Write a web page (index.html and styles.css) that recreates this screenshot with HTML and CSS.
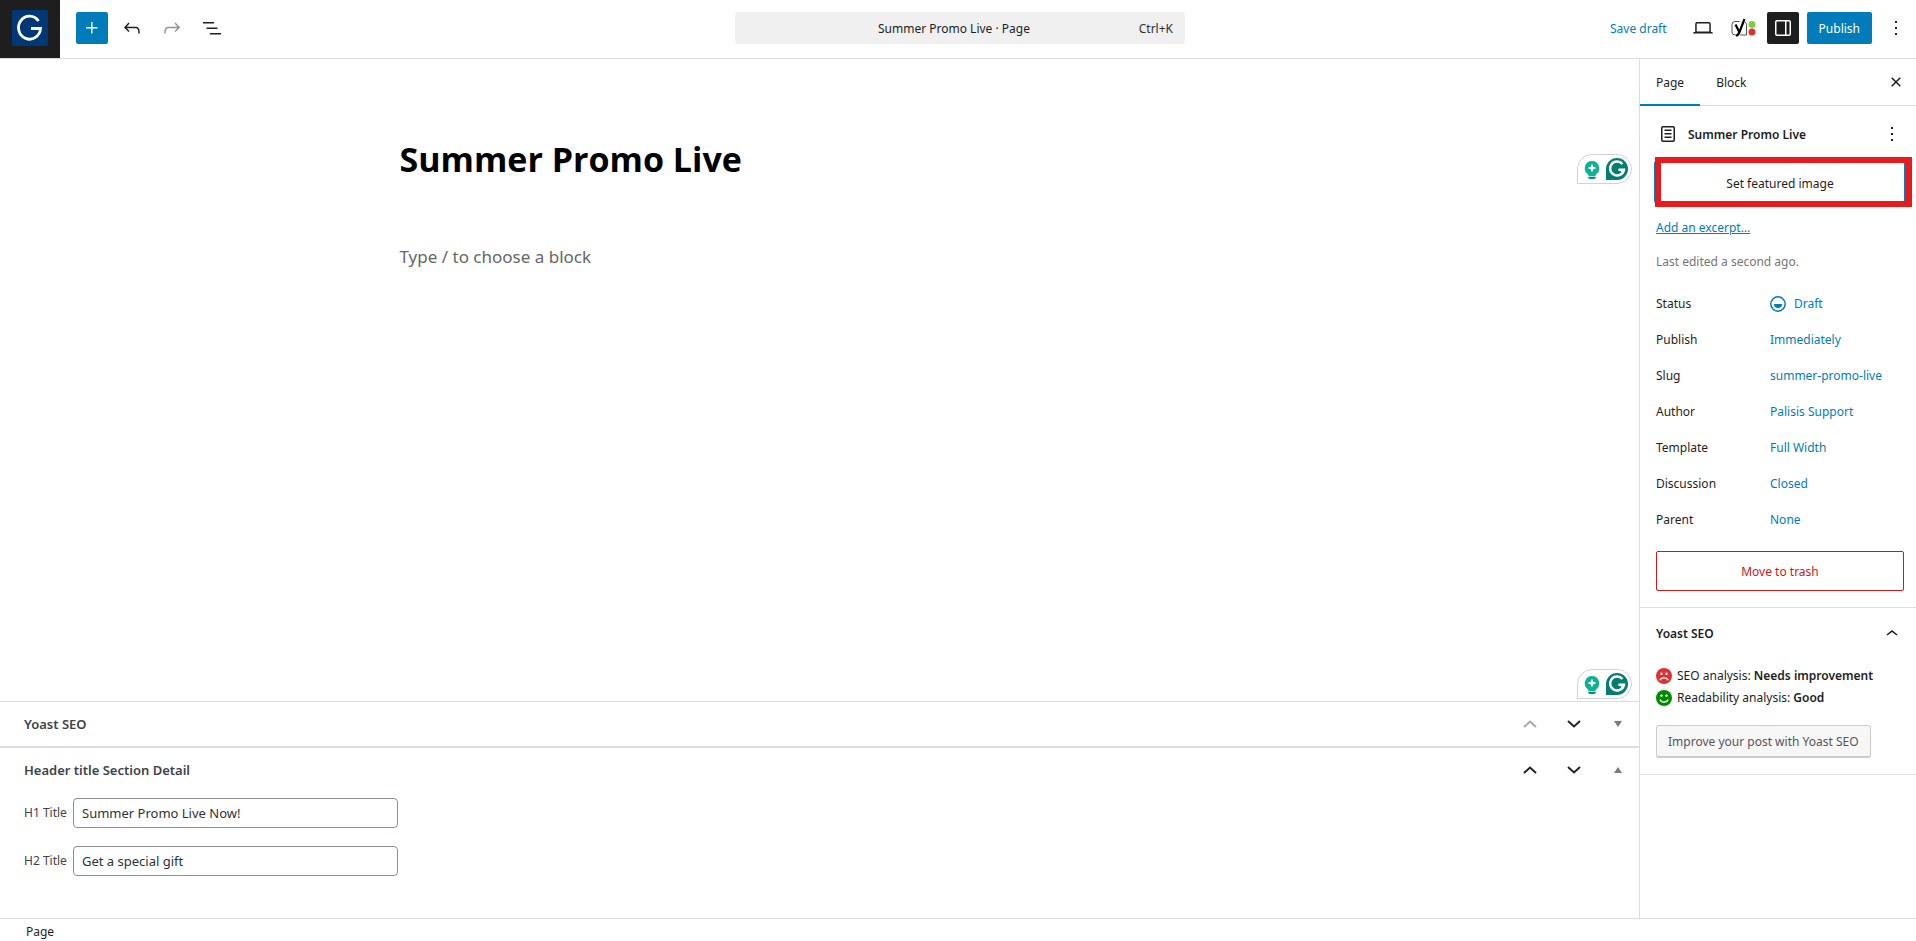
FILE: index.html
```html
<!DOCTYPE html>
<html lang="en">
<head>
    <meta charset="UTF-8">
    <meta name="viewport" content="width=device-width, initial-scale=1.0">
    <title>Summer Promo Live</title>
    <link rel="stylesheet" href="styles.css">
</head>
<body>
    <!-- Shared drawings -->
    <svg class="defs" aria-hidden="true">
        <symbol id="icon-more" viewBox="0 0 24 24">
            <path d="M13 19h-2v-2h2v2zm0-6h-2v-2h2v2zm0-6h-2V5h2v2z"/>
        </symbol>
        <symbol id="icon-up" viewBox="0 0 24 24">
            <path d="M6.5 12.4L12 8l5.5 4.4-.9 1.2L12 10l-4.5 3.6-1-1.2z"/>
        </symbol>
        <symbol id="icon-order" viewBox="0 0 14 8">
            <path d="M1 7l6-5.500 6 5.500" fill="none" stroke="currentColor" stroke-width="2"/>
        </symbol>
        <symbol id="icon-assist" viewBox="0 0 55 30">
            <path d="M.5 29.500V15A14.500 14.500 0 0 1 15 .5h25a14.500 14.500 0 0 1 0 29z" fill="#fff" stroke="#cdd0e0"/>
            <path d="M15 7a7.300 7.300 0 0 0-4.500 13c.8.700 1 1.200 1 2h7c0-.8.200-1.300 1-2A7.300 7.300 0 0 0 15 7z" fill="#0eb292"/>
            <path d="M15 9.500l1.300 3.200 3.200 1.300-3.200 1.300L15 18.500l-1.300-3.200-3.200-1.300 3.200-1.300z" fill="#fff"/>
            <path d="M11 22.800h8c-.2 1.600-1 2.200-2.200 2.200h-3.600c-1.200 0-2-.6-2.200-2.200z" fill="#078a73"/>
            <path d="M29 26V15a11 11 0 1 1 11 11z" fill="#027e6f"/>
            <path d="M45.500 10A7 7 0 1 0 47 15.700h-5.500M47 15.700l-2.500 2.500" fill="none" stroke="#fff" stroke-width="2.400"/>
        </symbol>
    </svg>

    <header class="topbar">
        <a class="site-logo" href="#" aria-label="View pages">
            <svg width="36" height="36" viewBox="0 0 36 36">
                <rect width="36" height="36" rx="2" fill="#003877"/>
                <path d="M26.500 11A11 11.500 0 1 0 28.500 18.500H19" fill="none" stroke="#fff" stroke-width="2.800"/>
            </svg>
        </a>
        <div class="tools">
            <button class="icon-button primary" aria-label="Block inserter">
                <svg width="24" height="24" viewBox="0 0 24 24"><path d="M11 12.500V17.500H12.500V12.500H17.500V11H12.500V6H11V11H6V12.500H11Z"/></svg>
            </button>
            <button class="icon-button" aria-label="Undo">
                <svg width="24" height="24" viewBox="0 0 24 24"><path d="M18.300 11.700c-.6-.6-1.400-.9-2.300-.9H6.700l2.900-3.300-1.100-1-4.500 5L8.500 16l1-1-2.700-2.700H16c.5 0 .9.200 1.300.5 1 1 1 3.400 1 4.500v.3h1.500v-.2c0-1.500 0-4.300-1.500-5.700z"/></svg>
            </button>
            <button class="icon-button faded" aria-label="Redo">
                <svg width="24" height="24" viewBox="0 0 24 24"><path d="M15.600 6.500l-1.100 1 2.900 3.300H8c-.9 0-1.700.3-2.300.9-1.400 1.500-1.400 4.200-1.400 5.600v.2h1.500v-.3c0-1.100 0-3.500 1-4.500.3-.3.700-.5 1.300-.5h9.200L14.500 15l1.100 1.100 4.600-4.600-4.600-5z"/></svg>
            </button>
            <button class="icon-button" aria-label="Document overview">
                <svg width="24" height="24" viewBox="0 0 24 24"><path d="M3 6h11v1.500H3V6Zm3.500 5.500h11V13h-11v-1.500ZM21 17H10v1.500h11V17Z"/></svg>
            </button>
        </div>
        <button class="document-bar">
            <span class="document-title">Summer Promo Live · Page</span>
            <span class="shortcut">Ctrl+K</span>
        </button>
        <div class="actions">
            <button class="save-draft">Save draft</button>
            <button class="icon-button" aria-label="View">
                <svg width="24" height="24" viewBox="0 0 24 24"><path d="M20.500 16h-.7V8c0-1.100-.9-2-2-2H6.200c-1.100 0-2 .9-2 2v8h-.7c-.8 0-1.500.7-1.500 1.500h20c0-.8-.7-1.500-1.500-1.500zM5.700 8c0-.3.200-.5.500-.5h11.600c.3 0 .5.200.5.500v7.600H5.700V8z"/></svg>
            </button>
            <button class="icon-button" aria-label="Yoast SEO">
                <svg width="26" height="20" viewBox="0 0 26 20">
                    <path d="M9.500 3.500H5A3 3 0 0 0 2 6.500v7.500a3 3 0 0 0 3 3h1.500M10 17h6.500V6.500a3 3 0 0 0-1.500-2.500" fill="none" stroke="#555"/>
                    <path d="M5.500 6.500l3.500 7M14.500 1L9.500 14c-.8 2-1.600 3.500-3.500 3.500" fill="none" stroke="#000" stroke-width="2.200"/>
                    <circle cx="22" cy="6.500" r="3.500" fill="#7ad03a"/>
                    <circle cx="22" cy="14" r="3.500" fill="#dc3232"/>
                </svg>
            </button>
            <button class="icon-button pressed" aria-label="Settings" aria-pressed="true">
                <svg width="24" height="24" viewBox="0 0 24 24"><path d="M18 4H6c-1.100 0-2 .9-2 2v12c0 1.100.9 2 2 2h12c1.100 0 2-.9 2-2V6c0-1.100-.9-2-2-2zm-4 14.500H6c-.3 0-.5-.2-.5-.5V6c0-.3.200-.5.500-.5h8v13zm4.500-.5c0 .3-.2.500-.5.500h-2.500v-13H18c.3 0 .5.200.5.500v12z"/></svg>
            </button>
            <button class="publish">Publish</button>
            <button class="icon-button" aria-label="Options">
                <svg width="24" height="24"><use href="#icon-more"/></svg>
            </button>
        </div>
    </header>

    <div class="workspace">
        <main class="editor">
            <section class="canvas">
                <div class="content">
                    <h1 class="post-title">Summer Promo Live</h1>
                    <p class="placeholder">Type / to choose a block</p>
                </div>
                <svg class="assist assist-title" width="55" height="30"><use href="#icon-assist"/></svg>
                <svg class="assist assist-body" width="55" height="30"><use href="#icon-assist"/></svg>
            </section>

            <section class="metabox">
                <div class="metabox-header">
                    <h2>Yoast SEO</h2>
                    <button class="order-button disabled" aria-label="Move up" disabled><svg width="14" height="8"><use href="#icon-order"/></svg></button>
                    <button class="order-button" aria-label="Move down"><svg class="flip" width="14" height="8"><use href="#icon-order"/></svg></button>
                    <button class="order-button toggle" aria-label="Expand"><svg class="flip" width="8" height="6" viewBox="0 0 8 6"><path d="M4 0l4 6H0z"/></svg></button>
                </div>
            </section>
            <section class="metabox metabox-open">
                <div class="metabox-header">
                    <h2>Header title Section Detail</h2>
                    <button class="order-button" aria-label="Move up"><svg width="14" height="8"><use href="#icon-order"/></svg></button>
                    <button class="order-button" aria-label="Move down"><svg class="flip" width="14" height="8"><use href="#icon-order"/></svg></button>
                    <button class="order-button toggle" aria-label="Collapse"><svg width="8" height="6" viewBox="0 0 8 6"><path d="M4 0l4 6H0z"/></svg></button>
                </div>
                <div class="fields">
                    <div class="field">
                        <label for="h1-title">H1 Title</label>
                        <input type="text" id="h1-title" value="Summer Promo Live Now!">
                    </div>
                    <div class="field">
                        <label for="h2-title">H2 Title</label>
                        <input type="text" id="h2-title" value="Get a special gift">
                    </div>
                </div>
            </section>
        </main>

        <aside class="sidebar">
            <div class="tabs">
                <button class="tab active">Page</button>
                <button class="tab">Block</button>
                <button class="icon-button close" aria-label="Close settings">
                    <svg width="24" height="24" viewBox="0 0 24 24"><path d="M12 13.060l3.712 3.713 1.061-1.060L13.061 12l3.712-3.712-1.060-1.060L12 10.938 8.288 7.227l-1.061 1.060L10.939 12l-3.712 3.712 1.060 1.061L12 13.061z"/></svg>
                </button>
            </div>

            <section class="panel summary">
                <div class="card">
                    <svg width="24" height="24" viewBox="0 0 24 24"><path d="M15.500 7.500h-7V9h7V7.500Zm-7 3.500h7v1.500h-7V11Zm7 3.500h-7V16h7v-1.500Z"/><path d="M17 4H7a2 2 0 0 0-2 2v12a2 2 0 0 0 2 2h10a2 2 0 0 0 2-2V6a2 2 0 0 0-2-2ZM7 5.500h10a.5.500 0 0 1 .5.500v12a.5.500 0 0 1-.5.500H7a.5.500 0 0 1-.5-.5V6a.5.500 0 0 1 .5-.5Z" fill-rule="evenodd"/></svg>
                    <h2>Summer Promo Live</h2>
                    <button class="icon-button card-menu" aria-label="Actions">
                        <svg width="24" height="24"><use href="#icon-more"/></svg>
                    </button>
                </div>
                <div class="featured">
                    <button class="featured-button">Set featured image</button>
                    <span class="highlight"></span>
                </div>
                <a class="excerpt" href="#">Add an excerpt…</a>
                <p class="edited">Last edited a second ago.</p>
                <dl class="rows">
                    <div class="row">
                        <dt>Status</dt>
                        <dd><button class="link-button">
                            <svg width="16" height="16" viewBox="0 0 16 16"><circle cx="8" cy="8" r="7.200" fill="none" stroke="currentColor" stroke-width="1.500"/><path d="M4 8h8a4 4 0 0 1-8 0z"/></svg>Draft</button></dd>
                    </div>
                    <div class="row"><dt>Publish</dt><dd><button class="link-button">Immediately</button></dd></div>
                    <div class="row"><dt>Slug</dt><dd><button class="link-button">summer-promo-live</button></dd></div>
                    <div class="row"><dt>Author</dt><dd><button class="link-button">Palisis Support</button></dd></div>
                    <div class="row"><dt>Template</dt><dd><button class="link-button">Full Width</button></dd></div>
                    <div class="row"><dt>Discussion</dt><dd><button class="link-button">Closed</button></dd></div>
                    <div class="row"><dt>Parent</dt><dd><button class="link-button">None</button></dd></div>
                </dl>
                <button class="trash">Move to trash</button>
            </section>

            <section class="panel seo">
                <button class="panel-toggle">Yoast SEO
                    <svg width="24" height="24"><use href="#icon-up"/></svg>
                </button>
                <ul class="scores">
                    <li>
                        <svg width="16" height="16" viewBox="0 0 16 16"><circle cx="8" cy="8" r="8" fill="#dc3232"/><circle cx="5.500" cy="5.800" r="1.200" fill="#fff"/><circle cx="10.500" cy="5.800" r="1.200" fill="#fff"/><path d="M4 12.300c1-3.200 7-3.200 8 0" fill="none" stroke="#fff" stroke-width="1.300"/></svg>
                        <span>SEO analysis: <strong>Needs improvement</strong></span>
                    </li>
                    <li>
                        <svg width="16" height="16" viewBox="0 0 16 16"><circle cx="8" cy="8" r="8" fill="#008a00"/><circle cx="5.500" cy="5.800" r="1.200" fill="#fff"/><circle cx="10.500" cy="5.800" r="1.200" fill="#fff"/><path d="M4 9.500c1 3.400 7 3.400 8 0" fill="none" stroke="#fff" stroke-width="1.300"/></svg>
                        <span>Readability analysis: <strong>Good</strong></span>
                    </li>
                </ul>
                <button class="improve">Improve your post with Yoast SEO</button>
            </section>
        </aside>
    </div>

    <footer class="breadcrumb">Page</footer>
</body>
</html>
```
FILE: styles.css
```css
* {
    box-sizing: border-box;
}

body {
    margin: 0;
    height: 100vh;
    display: flex;
    flex-direction: column;
    font-family: "Noto Sans", "Open Sans", sans-serif;
    font-size: 12px;
    line-height: 20px;
    color: #1e1e1e;
    background-color: #fff;
}

h1, h2, p, dl, dd, ul {
    margin: 0;
    padding: 0;
}

button, input {
    font: inherit;
    color: inherit;
}

button {
    border: none;
    padding: 0;
    background: none;
    cursor: pointer;
}

svg {
    display: block;
    flex: none;
    fill: currentColor;
}

.defs {
    position: absolute;
    width: 0;
    height: 0;
}

/* Top bar */
.topbar {
    display: grid;
    grid-template-columns: 60px 1fr 450px 1fr;
    flex: none;
    align-items: center;
    height: 59px;
    border-bottom: 1px solid #ddd;
}

.site-logo {
    display: flex;
    align-items: center;
    justify-content: center;
    height: 58px;
    padding-bottom: 2px;
    background-color: #1e1e1e;
}

.tools,
.actions {
    display: flex;
    align-items: center;
    gap: 8px;
    padding: 0 16px 2px;
}

.actions {
    justify-content: flex-end;
    padding-right: 4px;
}

.icon-button {
    display: flex;
    align-items: center;
    justify-content: center;
    width: 32px;
    height: 32px;
    border-radius: 2px;
}

.primary,
.publish {
    background-color: #007cba;
    color: #fff;
}

.faded {
    color: #949494;
}

.pressed {
    background-color: #1e1e1e;
    color: #fff;
}

/* Pulled left so the logo column does not push it off centre */
.document-bar {
    display: grid;
    grid-template-columns: 1fr auto 1fr;
    align-items: center;
    height: 32px;
    margin: 0 28px 2px -28px;
    padding: 2px 12px 0 0;
    border-radius: 4px;
    background-color: #f0f0f0;
}

.document-title {
    grid-column: 2;
}

.shortcut {
    text-align: right;
    color: #2f2f2f;
}

.save-draft,
.publish {
    height: 32px;
    padding: 2px 12px 0;
}

.save-draft {
    color: #007cba;
}

.publish {
    border-radius: 2px;
}

/* Editor */
.workspace {
    display: flex;
    flex: 1;
    min-height: 0;
}

.editor {
    display: flex;
    flex: 1;
    flex-direction: column;
    min-width: 0;
}

.canvas {
    position: relative;
    flex: 1;
}

.content {
    width: 840px;
    max-width: 100%;
    margin: 0 auto;
    padding-top: 76px;
}

.post-title {
    font-family: "Open Sans", "Noto Sans", sans-serif;
    font-size: 34px;
    line-height: 48px;
    font-weight: 700;
    color: #000;
}

.placeholder {
    margin-top: 60px;
    font-size: 17px;
    line-height: 28px;
    color: #666;
}

.assist {
    position: absolute;
    right: 7px;
}

.assist-title {
    top: 95px;
}

.assist-body {
    bottom: 2px;
}

.metabox {
    border-top: 1px solid #ddd;
    color: #3c434a;
}

.metabox-open {
    border-top-width: 2px;
}

.metabox-header {
    display: flex;
    align-items: center;
    height: 44px;
    padding-left: 24px;
}

.metabox-header h2 {
    flex: 1;
    font-size: 13px;
    font-weight: 600;
}

.order-button {
    display: flex;
    align-items: center;
    justify-content: center;
    width: 44px;
    height: 44px;
    color: #1d2327;
}

.disabled {
    color: #a7aaad;
}

.toggle {
    color: #787c82;
}

.order-button:last-child {
    margin-right: -1px;
}

.flip {
    transform: rotate(180deg);
}

.fields {
    display: flex;
    flex-direction: column;
    gap: 18px;
    padding: 6px 24px 42px;
}

.field {
    display: flex;
    align-items: center;
    gap: 4px;
}

.field label {
    width: 45px;
    white-space: nowrap;
}

.field input {
    width: 325px;
    height: 30px;
    padding: 0 8px;
    border: 1px solid #8c8f94;
    border-radius: 4px;
    background-color: #fff;
    font-size: 13px;
    color: #2c3338;
}

/* Settings sidebar */
.sidebar {
    flex: none;
    width: 277px;
    border-left: 1px solid #ddd;
}

.tabs {
    display: flex;
    align-items: center;
    height: 47px;
    border-bottom: 1px solid #ddd;
}

.tab {
    height: 47px;
    padding: 2px 16px 0;
}

.active {
    box-shadow: inset 0 -2px #007cba;
}

.close {
    margin-left: auto;
    margin-right: 4px;
}

.panel {
    padding: 0 12px 16px 16px;
    border-bottom: 1px solid #e0e0e0;
}

.summary {
    padding-top: 12px;
}

.card {
    display: flex;
    align-items: center;
    gap: 8px;
    height: 32px;
}

.card h2 {
    flex: 1;
    padding-top: 2px;
    font-size: 12px;
    font-weight: 600;
}

.card-menu {
    margin-right: -4px;
}

.featured {
    position: relative;
    margin-top: 12px;
}

.featured-button {
    width: 100%;
    height: 40px;
    padding-top: 3px;
    border-radius: 2px;
    box-shadow: 0 0 0 2px #007cba;
}

.highlight {
    position: absolute;
    inset: -5px -8px -5px -1px;
    border: 6px solid #e81a1c;
    pointer-events: none;
}

.excerpt {
    display: block;
    width: max-content;
    margin-top: 16px;
    color: #007cba;
}

.edited {
    margin-top: 14px;
    color: #757575;
}

.rows {
    display: flex;
    flex-direction: column;
    gap: 4px;
    margin-top: 15px;
}

.row {
    display: flex;
    align-items: center;
    height: 32px;
    padding-top: 2px;
}

.row dt {
    width: 114px;
}

.link-button {
    display: flex;
    align-items: center;
    gap: 8px;
    color: #007cba;
}

.trash {
    display: block;
    width: 100%;
    height: 40px;
    margin-top: 16px;
    padding-top: 2px;
    border: 1px solid #cc1818;
    border-radius: 2px;
    color: #cc1818;
}

.panel-toggle {
    display: flex;
    align-items: center;
    justify-content: space-between;
    width: 100%;
    height: 50px;
    padding-top: 2px;
    font-weight: 600;
}

.scores {
    display: flex;
    flex-direction: column;
    gap: 2px;
    margin-top: 8px;
    list-style: none;
}

.scores li {
    display: flex;
    align-items: center;
    gap: 5px;
}

.scores strong {
    font-weight: 600;
}

.improve {
    height: 33px;
    margin-top: 17px;
    padding: 1px 11px 0;
    border: 1px solid #ccc;
    border-bottom-width: 2px;
    border-radius: 3px;
    background-color: #f7f7f7;
    color: #555;
}

.breadcrumb {
    flex: none;
    height: 23px;
    padding: 3px 26px 0;
    border-top: 1px solid #ddd;
}
```
